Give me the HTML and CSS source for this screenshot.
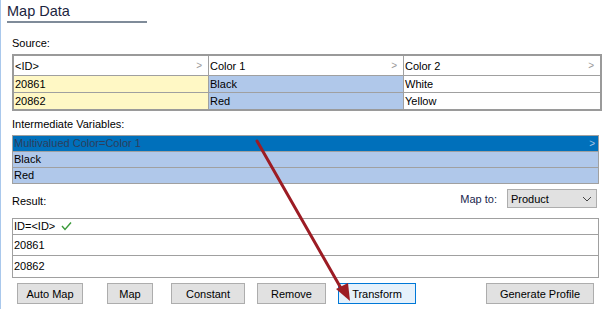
FILE: index.html
```html
<!DOCTYPE html>
<html lang="en">
<head>
    <meta charset="UTF-8">
    <title>Map Data</title>
    <link rel="stylesheet" href="styles.css">
</head>
<body>
<div class="page">
    <div class="title">Map Data</div>

    <div class="label label-source">Source:</div>
    <div class="grid source">
        <div class="row head">
            <div class="cell">&lt;ID&gt;<span class="more">&gt;</span></div>
            <div class="cell">Color 1<span class="more">&gt;</span></div>
            <div class="cell">Color 2<span class="more">&gt;</span></div>
        </div>
        <div class="row">
            <div class="cell yellow">20861</div>
            <div class="cell blue">Black</div>
            <div class="cell">White</div>
        </div>
        <div class="row">
            <div class="cell yellow">20862</div>
            <div class="cell blue">Red</div>
            <div class="cell">Yellow</div>
        </div>
    </div>

    <div class="label label-inter">Intermediate Variables:</div>
    <div class="grid inter">
        <div class="line selected">Multivalued Color=Color 1<span class="more">&gt;</span></div>
        <div class="line blue">Black</div>
        <div class="line blue">Red</div>
    </div>

    <div class="result-bar">
        <div class="label">Result:</div>
        <div class="map-to">
            <span>Map to:</span>
            <div class="select">Product
                <svg width="10" height="6" viewBox="0 0 10 6"><path d="M1 1 L5 5 L9 1" fill="none" stroke="#444" stroke-width="1"/></svg>
            </div>
        </div>
    </div>
    <div class="grid result">
        <div class="line r1">ID=&lt;ID&gt;
            <svg class="check" width="11" height="10" viewBox="0 0 11 10"><path d="M1 5 L4 8.5 L10 1.5" fill="none" stroke="#3a9a3a" stroke-width="1.4"/></svg>
        </div>
        <div class="line r2">20861</div>
        <div class="line r3">20862</div>
    </div>

    <div class="buttons">
        <button class="btn b-auto">Auto Map</button>
        <button class="btn b-map">Map</button>
        <button class="btn b-const">Constant</button>
        <button class="btn b-remove">Remove</button>
        <button class="btn b-transform focus">Transform</button>
        <button class="btn b-profile">Generate Profile</button>
    </div>

    <svg class="arrow" width="603" height="309" viewBox="0 0 603 309">
        <line x1="257" y1="141" x2="342" y2="290" stroke="#9c1c24" stroke-width="3" stroke-linecap="round"/>
        <path d="M336 289 L350 301 L348 283 Z" fill="#9c1c24"/>
    </svg>
</div>
</body>
</html>
```

FILE: styles.css
```css
body {
    margin: 0;
    font-family: "Liberation Sans", Arial, sans-serif;
    font-size: 11px;
    color: #000;
    background: #fff;
}
.page {
    position: relative;
    width: 602px;
    height: 309px;
    border-left: 1px solid #a9c8ec;
    overflow: hidden;
}
.title {
    margin-left: 6px;
    width: 140px;
    padding-top: 3px;
    height: 18px;
    font-size: 14.5px;
    color: #1b2440;
    border-bottom: 2px solid #7f8b99;
}
.label {
    margin-left: 11px;
    height: 14px;
    line-height: 14px;
}
.label-source {
    margin-top: 13px;
}
.label-inter {
    margin-top: 6px;
}
.grid {
    margin-left: 11px;
    border: 1px solid #a0a0a0;
}
.source {
    margin-top: 4px;
    width: 586px;
    border-width: 2px;
    border-color: #9a9a9a;
}
.row {
    display: grid;
    grid-template-columns: 194px 195px 1fr;
    border-top: 1px solid #a0a0a0;
    height: 16px;
}
.row.head {
    border-top: none;
    height: 19px;
}
.cell {
    position: relative;
    line-height: 16px;
    border-left: 1px solid #a0a0a0;
    padding-left: 1px;
    white-space: nowrap;
}
.head .cell {
    line-height: 20px;
}
.cell:first-child {
    border-left: none;
}
.more {
    position: absolute;
    right: 6px;
    top: 0;
    color: #999;
    font-size: 10px;
}
.yellow {
    background: #fff8c5;
}
.blue {
    background: #b0c8ea;
}
.inter {
    margin-top: 4px;
    width: 585px;
    border-width: 1px;
}
.line {
    position: relative;
    height: 15px;
    line-height: 15px;
    border-top: 1px solid #a0a0a0;
    padding-left: 1px;
    white-space: nowrap;
}
.line:first-child {
    border-top: none;
}
.selected {
    background: #0070bb;
    color: #2d3e5c;
}
.selected .more {
    color: #a8c4e4;
    right: 3px;
}
.result-bar {
    display: flex;
    justify-content: space-between;
    align-items: flex-end;
    margin-top: 5px;
    width: 596px;
}
.map-to {
    display: flex;
    align-items: center;
    gap: 10px;
    color: #1a1f4e;
}
.select {
    display: flex;
    align-items: center;
    justify-content: space-between;
    width: 81px;
    height: 17px;
    padding: 0 4px 0 3px;
    background: #e1e1e1;
    border: 1px solid #adadad;
    color: #000;
}
.result {
    margin-top: 10px;
    width: 585px;
}
.r1 {
    height: 15px;
    line-height: 15px;
}
.r2 {
    height: 20px;
    line-height: 20px;
}
.r3 {
    height: 21px;
    line-height: 21px;
}
.check {
    margin-left: 3px;
    vertical-align: -1px;
}
.buttons {
    display: flex;
    margin-top: 5px;
    margin-left: 16px;
}
.btn {
    height: 21px;
    padding: 0;
    font-family: "Liberation Sans", Arial, sans-serif;
    font-size: 11px;
    color: #000;
    background: #e1e1e1;
    border: 1px solid #adadad;
}
.btn.focus {
    background: #e5f1fb;
    border-color: #0078d7;
}
.b-auto { width: 66px; }
.b-map { width: 46px; margin-left: 24px; }
.b-const { width: 74px; margin-left: 18px; }
.b-remove { width: 69px; margin-left: 12px; }
.b-transform { width: 78px; margin-left: 12px; }
.b-profile { width: 108px; margin-left: 70px; }
.arrow {
    position: absolute;
    left: -1px;
    top: 0;
    pointer-events: none;
}
```
